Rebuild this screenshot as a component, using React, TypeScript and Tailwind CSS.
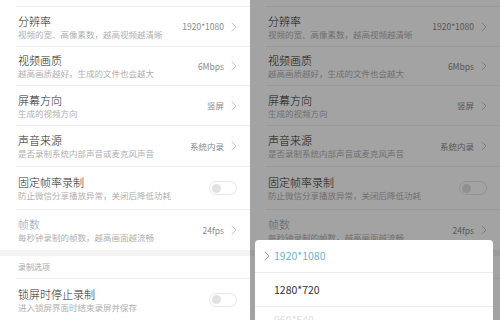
import React from 'react';

type Item = {
  title: string;
  desc: string;
  value?: string;
  toggle?: boolean;
  disabled?: boolean;
  h: string;
  line?: boolean;
};

const items: Item[] = [
  { title: '分辨率', desc: '视频的宽、高像素数，越高视频越清晰', value: '1920*1080', h: 'h-[40px]', line: true },
  { title: '视频画质', desc: '越高画质越好，生成的文件也会越大', value: '6Mbps', h: 'h-[39px]', line: true },
  { title: '屏幕方向', desc: '生成的视频方向', value: '竖屏', h: 'h-[40px]', line: true },
  { title: '声音来源', desc: '是否录制系统内部声音或麦克风声音', value: '系统内录', h: 'h-[41px]', line: true },
  { title: '固定帧率录制', desc: '防止微信分享播放异常，关闭后降低功耗', toggle: true, h: 'h-[43px]', line: true },
  { title: '帧数', desc: '每秒钟录制的帧数，越高画面越流畅', value: '24fps', disabled: true, h: 'h-[40px]' },
];

function Chevron({ className }: { className?: string }) {
  return (
    <svg width="6" height="10" viewBox="0 0 6 10" className={className}>
      <path d="M1 1l4 4-4 4" fill="none" stroke="currentColor" strokeWidth="1" strokeLinecap="round" strokeLinejoin="round" />
    </svg>
  );
}

function Toggle() {
  return (
    <div className="w-[28px] h-[14px] rounded-full border border-[#e6e6e6] flex items-center px-[2px]">
      <div className="w-[9px] h-[9px] rounded-full bg-[#e2e2e2]" />
    </div>
  );
}

function Row({ item }: { item: Item }) {
  return (
    <div className="pl-[16px]">
      <div className={`${item.h} ${item.line ? 'border-b border-[#efefef]' : ''} flex items-center justify-between pl-[2px] pr-[13px]`}>
        <div className="flex flex-col">
          <span className={`text-[11px] leading-[14px] font-light ${item.disabled ? 'text-[#9a9a9a]' : 'text-[#1e1e1e]'}`}>{item.title}</span>
          <span className="text-[8.5px] leading-[12px] text-[#b0b0b0] whitespace-nowrap">{item.desc}</span>
        </div>
        {item.toggle ? (
          <Toggle />
        ) : (
          <div className="flex items-center gap-[7px] text-[#c4c4c4]">
            <span className="text-[8.5px] text-[#8a8a8a]">{item.value}</span>
            <Chevron />
          </div>
        )}
      </div>
    </div>
  );
}

function Settings() {
  return (
    <div className="flex flex-col bg-white">
      <div className="pl-[16px] -mt-[33px]">
        <div className="h-[40px] border-b border-[#efefef] flex flex-col justify-center pl-[2px]">
          <span className="text-[11px] leading-[14px] font-light text-[#1e1e1e]">显示触摸操作</span>
          <span className="text-[8.5px] leading-[12px] text-[#b0b0b0]">录制时显示触摸位置</span>
        </div>
      </div>
      {items.map((it) => (
        <Row key={it.title} item={it} />
      ))}
      <div className="h-[6px] bg-[#f3f3f3]" />
      <div className="pl-[16px]">
        <div className="h-[23px] border-b border-[#efefef] flex items-center pl-[2px] text-[8px] text-[#a8a8a8]">录制选项</div>
      </div>
      <div className="pl-[16px]">
        <div className="h-[41px] flex items-center justify-between pl-[2px] pr-[13px]">
          <div className="flex flex-col">
            <span className="text-[11px] leading-[14px] font-light text-[#1e1e1e]">锁屏时停止录制</span>
            <span className="text-[8.5px] leading-[12px] text-[#b0b0b0]">进入锁屏界面时结束录屏并保存</span>
          </div>
          <Toggle />
        </div>
      </div>
    </div>
  );
}

export default function App() {
  return (
    <div className="w-[500px] h-[320px] flex overflow-hidden font-['Noto_Sans_CJK_SC','Liberation_Sans',sans-serif]">
      <div className="w-[250px] h-[320px] overflow-hidden bg-white">
        <Settings />
      </div>
      <div className="relative w-[250px] h-[320px] overflow-hidden bg-white">
        <Settings />
        <div className="absolute inset-0 bg-black/[0.36]" />
        <div className="absolute left-[5px] right-[7px] top-[240px] bottom-0 bg-white rounded-t-[4px] flex flex-col overflow-hidden">
          <div className="h-[33px] shrink-0 border-b border-[#ececec] flex items-center pl-[9px] gap-[4px] text-[#6cb4d4]">
            <Chevron className="text-[#7fa9bd]" />
            <span className="text-[10.5px]">1920*1080</span>
          </div>
          <div className="h-[34px] shrink-0 border-b border-[#ececec] flex items-center pl-[19px] text-[10.5px] text-[#333]">1280*720</div>
          <div className="h-[33px] shrink-0 pt-[6px] pl-[19px] text-[10.5px] leading-[14px] text-[#e0e0e0]">960*540</div>
        </div>
      </div>
    </div>
  );
}
